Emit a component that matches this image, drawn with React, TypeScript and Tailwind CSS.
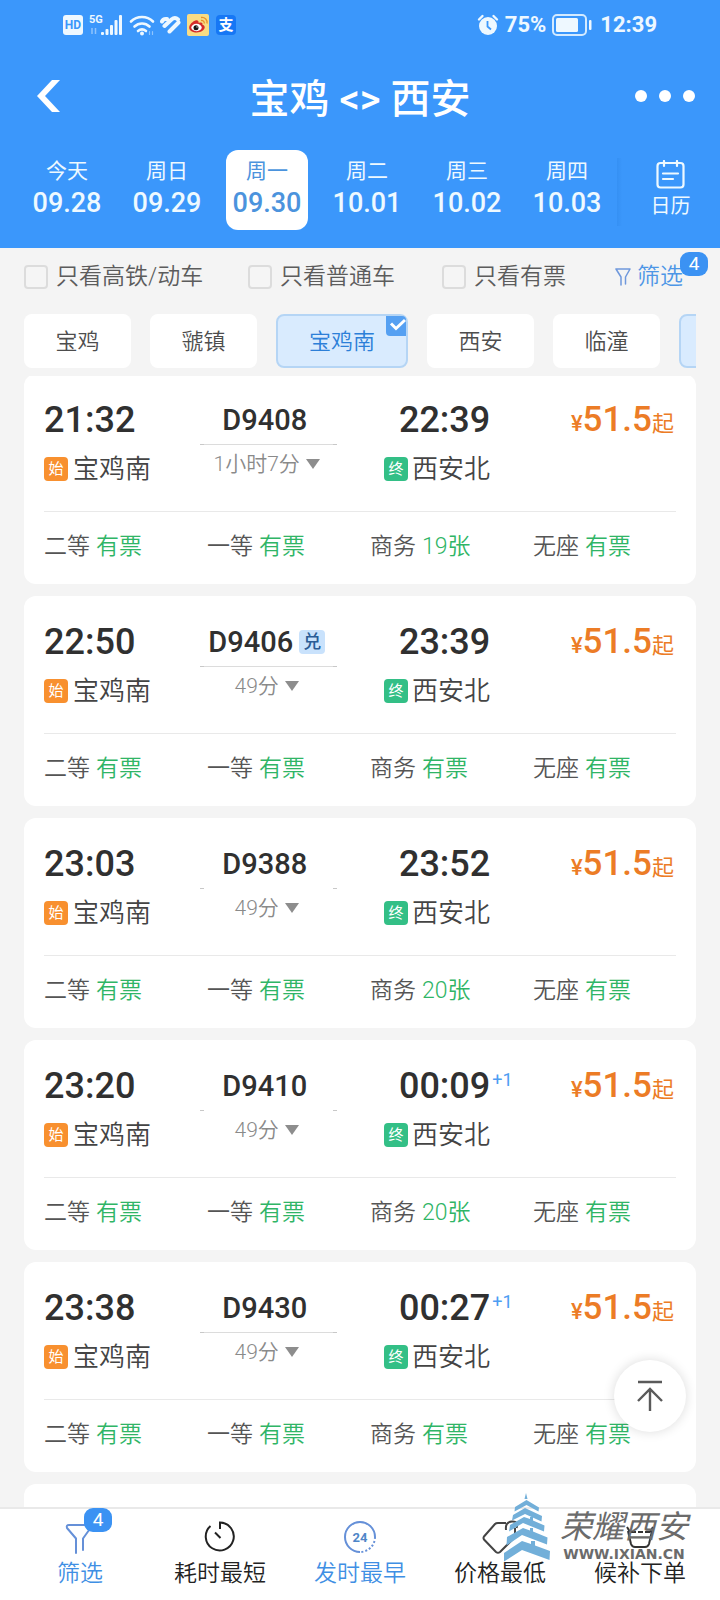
import React from 'react';
import clsx from 'clsx';

interface Seat {
  name: string;
  left: string;
}

interface Train {
  no: string;
  depart: string;
  arrive: string;
  duration: string;
  nextDay?: boolean;
  exchange?: boolean;
  faintLine?: boolean;
  business: string;
}

const dates = [
  { week: '今天', day: '09.28' },
  { week: '周日', day: '09.29' },
  { week: '周一', day: '09.30' },
  { week: '周二', day: '10.01' },
  { week: '周三', day: '10.02' },
  { week: '周四', day: '10.03' },
];

const trains: Train[] = [
  { no: 'D9408', depart: '21:32', arrive: '22:39', duration: '1小时7分', business: '19张' },
  { no: 'D9406', depart: '22:50', arrive: '23:39', duration: '49分', exchange: true, business: '有票' },
  { no: 'D9388', depart: '23:03', arrive: '23:52', duration: '49分', faintLine: true, business: '20张' },
  { no: 'D9410', depart: '23:20', arrive: '00:09', duration: '49分', nextDay: true, faintLine: true, business: '20张' },
  { no: 'D9430', depart: '23:38', arrive: '00:27', duration: '49分', nextDay: true, business: '有票' },
];

const StatusBar: React.FC = () => (
  <div className="flex h-[49px] items-center justify-between pl-[63px] pr-[63px]">
    <div className="flex items-center">
      <span className="flex h-5 w-5 items-center justify-center rounded-[3px] bg-[#eef8ff] text-[12px] font-bold leading-5 text-[#3b97fb]">
        HD
      </span>
      <svg className="ml-1.5 h-6 w-[34px]" viewBox="0 0 34 24" fill="#eef8ff">
        <text x="0" y="10" fontSize="11" fontWeight="700" fontFamily="Roboto, sans-serif">5G</text>
        <path d="M3 15v6M6.500 15v6" stroke="#8fc4fd" strokeWidth="1.500" />
        <rect x="12" y="19" width="3" height="3" rx="1" />
        <rect x="16.500" y="16" width="3" height="6" rx="1" />
        <rect x="21" y="12" width="3" height="10" rx="1" />
        <rect x="25.500" y="7" width="3" height="15" rx="1" />
        <rect x="30" y="2" width="3" height="20" rx="1" />
      </svg>
      <svg className="ml-1.5 h-6 w-[26px]" viewBox="0 0 26 24" fill="none" stroke="#eef8ff" strokeWidth="2.600" strokeLinecap="round">
        <path d="M2 8.500c6-6 16-6 22 0M5.500 13.500c4.200-4 10.800-4 15 0M9 18c2.400-2 5.600-2 8 0" />
        <circle cx="13" cy="20.500" r="2" fill="#eef8ff" stroke="none" />
        <path d="M20.500 18.500v3M23.500 18.500v3" stroke="#8fc4fd" strokeWidth="1.200" />
      </svg>
      <svg className="ml-1 h-5 w-[22px]" viewBox="0 0 22 20" fill="none" stroke="#eef8ff" strokeWidth="4" strokeLinecap="round" strokeLinejoin="round">
        <path d="M3 6.500q1-3 5-2.500M5.500 11L12.500 4.500q3.500-3 6.500 0M10.500 16.500L19.500 7.500" />
      </svg>
      <svg className="ml-1.5 h-[22px] w-[22px]" viewBox="0 0 22 22">
        <rect width="22" height="22" rx="2" fill="#f9dc84" />
        <path d="M9 6.200c-3 .8-6.800 4.300-6.800 7.500 0 3 3.600 4.800 7.500 4.800 4.700 0 8-2.700 8-5.200 0-1.600-1.200-2.300-2.300-2.600.6-1.600-.6-2.900-3.800-1.700.4-1.600-.6-3.200-2.600-2.800z" fill="#d52b2a" />
        <ellipse cx="9.500" cy="13.500" rx="5.200" ry="3.700" fill="#fff" />
        <circle cx="9" cy="13.700" r="2.500" fill="#151515" />
        <circle cx="10" cy="12.900" r=".7" fill="#fff" />
        <path d="M14 6.500c2-.3 3.500 1 3.300 3M14 3.500c4-.6 6.700 2.500 6 6" fill="none" stroke="#e8912a" strokeWidth="1.300" />
      </svg>
      <span className="ml-[7px] flex h-5 w-5 items-center justify-center rounded bg-[#1677f5] text-[15px] font-bold leading-5 text-white">
        支
      </span>
    </div>
    <div className="flex items-center text-[22px] font-bold text-[#eef8ff]">
      <svg className="mr-1.5 h-[22px] w-[22px]" viewBox="0 0 22 22" fill="none">
        <circle cx="11" cy="12" r="9" fill="#eef8ff" />
        <path d="M2 5.500L5.500 2M20 5.500L16.500 2" stroke="#eef8ff" strokeWidth="2.400" strokeLinecap="round" />
        <path d="M10.500 7v5.500l3.500 3" stroke="#3b97fb" strokeWidth="1.800" />
      </svg>
      75%
      <svg className="ml-1.5 mr-2 h-[22px] w-[40px]" viewBox="0 0 40 22" fill="none">
        <rect x="1" y="1" width="33" height="20" rx="4" stroke="#d3eaff" strokeWidth="2" />
        <rect x="4" y="4" width="22" height="14" rx="1.500" fill="#eef8ff" />
        <rect x="37" y="6" width="2.500" height="10" rx="1" fill="#eef8ff" />
      </svg>
      12:39
    </div>
  </div>
);

const Header: React.FC = () => (
  <header className="bg-[#3b97fb] pb-[18px] text-white">
    <StatusBar />
    <div className="flex h-[101px] items-center justify-between pb-2 pl-[37px] pr-[25px]">
      <button aria-label="返回" className="flex w-12">
        <svg className="h-8 w-[23px]" viewBox="0 0 23 32" fill="#fff">
          <path d="M15 0h8L8 16l15 16h-8L0 16z" />
        </svg>
      </button>
      <h1 className="pt-2 text-[40px] font-medium leading-[48px]">宝鸡 &lt;&gt; 西安</h1>
      <button aria-label="更多" className="flex gap-3">
        <span className="h-3 w-3 rounded-full bg-white" />
        <span className="h-3 w-3 rounded-full bg-white" />
        <span className="h-3 w-3 rounded-full bg-white" />
      </button>
    </div>
    <nav className="grid grid-cols-[repeat(6,minmax(0,100fr))_minmax(0,103fr)] pl-[17px]">
      {dates.map((d) => {
        const active = d.day === '09.30';
        return (
          <button
            key={d.day}
            className={clsx(
              'mx-auto flex h-20 w-[82px] flex-col items-center rounded-xl pt-1.5',
              active ? 'bg-white text-[#4b93dd]' : 'text-[#eef9ff]',
            )}
          >
            <span className="text-[21px] leading-[30px]">{d.week}</span>
            <span className="text-[27px] font-medium leading-[34px]">{d.day}</span>
          </button>
        );
      })}
      <button className="mb-1 mt-2 flex flex-col items-center bg-linear-to-r from-[#3590f3] to-[#3b97fb] to-5% pl-1 pt-0.5 text-[#eef9ff]">
        <svg className="h-[29px] w-[29px]" viewBox="0 0 29 29" fill="none" stroke="currentColor" strokeWidth="2.200" strokeLinecap="round">
          <rect x="1.500" y="3" width="26" height="24.500" rx="3" />
          <path d="M8 1v5M21 1v5M7 13.500h15M7 19h10" />
        </svg>
        <span className="text-[20px] leading-[34px]">日历</span>
      </button>
    </nav>
  </header>
);

const CheckFilter: React.FC<{ label: string }> = ({ label }) => (
  <label className="flex items-center gap-2 whitespace-nowrap text-[#5c5c5c]">
    <input
      type="checkbox"
      className="h-6 w-6 shrink-0 appearance-none rounded border-2 border-[#dcdcdc] bg-[#f5f5f5] checked:bg-[#3b97fb]"
    />
    {label}
  </label>
);

const Badge: React.FC<{ className: string }> = ({ className }) => (
  <span
    className={clsx(
      'absolute flex h-6 w-7 items-center justify-center rounded-[9px] bg-[#3b92f3] text-[19px] font-normal leading-6 text-white',
      className,
    )}
  >
    4
  </span>
);

const Filters: React.FC = () => (
  <div className="grid h-[58px] grid-cols-[224fr_194fr_173fr_105fr] items-center pl-6 text-[23px] font-[350]">
    <CheckFilter label="只看高铁/动车" />
    <CheckFilter label="只看普通车" />
    <CheckFilter label="只看有票" />
    <button className="relative flex items-center gap-1.5 whitespace-nowrap text-[#4d96e6]">
      <svg className="h-[18px] w-4" viewBox="0 0 16 18" fill="none" stroke="#6f98dc" strokeWidth="1.500">
        <path d="M6 17V9L1 1h14l-4.500 8v7" strokeLinecap="round" strokeLinejoin="round" />
      </svg>
      筛选
      <Badge className="-top-2 right-3" />
    </button>
  </div>
);

const stations = ['宝鸡', '虢镇', '宝鸡南', '西安', '临潼'];

const Stations: React.FC = () => (
  <div className="mx-6 mt-2 flex gap-[19px] overflow-hidden text-[22px] font-[350]">
    {stations.map((s) => {
      const active = s === '宝鸡南';
      return (
        <button
          key={s}
          className={clsx(
            'relative h-[54px] shrink-0 rounded-lg',
            active ? 'w-[132px] border-2 border-[#b5d5f5] bg-[#d9ebfe] text-[#2c7fd8]' : 'w-[107px] bg-white text-[#4d4d4d]',
          )}
        >
          {s}
          {active && (
            <svg className="absolute right-0 top-0 h-5 w-5" viewBox="0 0 20 20" fill="none">
              <path d="M0 0h16a4 4 0 014 4v16H4a4 4 0 01-4-4z" fill="#55a0f2" />
              <path d="M5 7.500l5 5L19 4" stroke="#fff" strokeWidth="3" />
            </svg>
          )}
        </button>
      );
    })}
    <button aria-label="西安北" className="h-[54px] w-[132px] shrink-0 rounded-lg border-2 border-[#b5d5f5] bg-[#d9ebfe]" />
  </div>
);

const StationTag: React.FC<{ text: string; color: string }> = ({ text, color }) => (
  <span className={clsx('flex h-6 w-6 items-center justify-center rounded text-[15px] font-normal leading-6 text-white', color)}>
    {text}
  </span>
);

const TrainCard: React.FC<{ train: Train }> = ({ train }) => {
  const seats: Seat[] = [
    { name: '二等', left: '有票' },
    { name: '一等', left: '有票' },
    { name: '商务', left: train.business },
    { name: '无座', left: '有票' },
  ];

  return (
    <article className="rounded-xl bg-white pb-[18px] pt-6">
      <div className="mx-5 grid grid-cols-[156fr_136fr_338fr] border-b border-[#e9e9e9] pb-[23px]">
        <div>
          <div className="text-4xl font-medium leading-[44px]">{train.depart}</div>
          <div className="mt-2 flex items-center gap-[5px] text-[26px] font-[350] leading-[38px] text-[#444]">
            <StationTag text="始" color="bg-[#f8902f]" />
            宝鸡南
          </div>
        </div>
        <div className="flex flex-col">
          <div className="flex items-center justify-center gap-1.5 pr-2 text-[29px] font-medium leading-[44px]">
            {train.no}
            {train.exchange && (
              <span className="-mr-1 flex h-6 w-[26px] items-center justify-center rounded bg-[#c9e2fc] text-[18px] leading-6 text-[#2a5c96]">
                兑
              </span>
            )}
          </div>
          <div className={clsx('mt-0.5 flex items-center justify-between', !train.faintLine && 'bg-[#dcdcdc]')}>
            <span className="h-px w-1 bg-[#c8c8c8]" />
            <span className="h-px w-1 bg-[#c8c8c8]" />
          </div>
          <button className="flex items-center justify-center gap-1.5 pr-1 text-[21px] font-[350] leading-[38px] text-[#8a8a8a]">
            {train.duration}
            <svg className="h-[10px] w-[14px]" viewBox="0 0 14 10" fill="#8d8d8d">
              <path d="M0 0h14L7 10z" />
            </svg>
          </button>
        </div>
        <div className="flex justify-between pl-[47px] pr-0.5">
          <div>
            <div className="flex pl-[15px] text-4xl font-medium leading-[44px]">
              {train.arrive}
              {train.nextDay && <span className="pl-0.5 pt-1 text-[18px] font-normal leading-6 text-[#4d9df2]">+1</span>}
            </div>
            <div className="mt-2 flex items-center gap-1 text-[26px] font-[350] leading-[38px] text-[#444]">
              <StationTag text="终" color="bg-[#33bf86]" />
              西安北
            </div>
          </div>
          <div className="text-[35px] font-medium leading-[44px] text-[#ec7c26]">
            <span className="text-[22px]">¥</span>51.5<span className="text-[22px] font-normal">起</span>
          </div>
        </div>
      </div>
      <ul className="grid grid-cols-4 pl-5 pt-4 text-[23px] font-[350] leading-[38px] text-[#555]">
        {seats.map((seat) => (
          <li key={seat.name} className="flex gap-1.5">
            {seat.name}
            <span className="text-[#2fb566]">{seat.left}</span>
          </li>
        ))}
      </ul>
    </article>
  );
};

const navItem = 'flex flex-col items-center gap-0.5';

const BottomNav: React.FC = () => (
  <nav className="grid grid-cols-5 border-t-2 border-[#e9e9e9] bg-white px-2.5 pb-2 pt-[11px] text-[23px] font-[350] leading-9 text-[#222]">
    <button className={clsx(navItem, 'text-[#3f8fe4]')}>
      <span className="relative">
        <svg className="h-[34px] w-8" viewBox="0 0 32 34" fill="none" stroke="#6590d8" strokeWidth="2" strokeLinecap="round" strokeLinejoin="round">
          <path d="M12 33V18.500L3 8q-1-3 2-3h20q3 0 1.500 3L19 18.500V30" />
        </svg>
        <Badge className="-right-4 -top-3" />
      </span>
      筛选
    </button>
    <button className={navItem}>
      <svg className="h-[34px] w-8" viewBox="0 0 32 34" fill="none" stroke="#222" strokeWidth="2">
        <path d="M6.500 6A14 14 0 1 0 16 2.500v6.500M11 12.500l5.500 5.500" />
      </svg>
      耗时最短
    </button>
    <button className={clsx(navItem, 'text-[#3f8fe4]')}>
      <svg className="h-[34px] w-8" viewBox="0 0 32 34" fill="none" stroke="#6590d8" strokeWidth="2">
        <path d="M31 17A15 15 0 1 0 16 32" />
        <path d="M31 17A15 15 0 0 1 16 32" strokeDasharray="2 2" />
        <text x="16" y="22" textAnchor="middle" fontSize="13" fontWeight="700" fill="#4f86c8" stroke="none">24</text>
      </svg>
      发时最早
    </button>
    <button className={navItem}>
      <svg className="h-[34px] w-9" viewBox="0 0 36 34" fill="none" stroke="#444" strokeWidth="2" strokeLinejoin="round">
        <path d="M24 3h-8q-2 0-3 1L2 16.500q-1 1.500 0 3L14 32q2 1.500 4 0L33 17V8" />
        <path d="M24 10q-1-8 6-8.500t4.500 6.500" />
      </svg>
      价格最低
    </button>
    <button className={navItem}>
      <svg className="h-[34px] w-8" viewBox="0 0 32 34" fill="none" stroke="#333" strokeWidth="2" strokeLinejoin="round">
        <path d="M4 11l3 13q1 3 4 3h10q3 0 4-3l3-13M7 12h5M14 12h5M21 12h5M3 7l3 5M29 7l-3 5" />
      </svg>
      候补下单
    </button>
  </nav>
);

const Watermark: React.FC = () => (
  <div className="pointer-events-none absolute bottom-[37px] right-8 flex items-end gap-2">
    <svg className="h-[70px] w-12" viewBox="0 0 48 70" fill="#72afd9">
      <path d="M22 0l1.500 6h-3z" />
      <path d="M22.500 7L35 14.500l-.5 4L22.500 12l-12 6.500.5-4.500z" />
      <path d="M21 15l17 8-.5 5.500L21 21 8 27.500 9 22z" />
      <path d="M20 24l6 2v-2h3v3.500l11.500 5-.5 6L19 30 5 38.500 6 32z" />
      <path d="M19 35l7 2.500V35h3v3.500l14.500 6-.5 7L18 42 2.500 52.500 3 44z" />
      <path d="M18 48l9 3v-3h4v4.500L46 58l-.5 9L18 57 0 68.500V60z" />
    </svg>
    <div className="flex flex-col items-center text-[#6b6b6b]">
      <span className="text-[32px] italic leading-9">荣耀西安</span>
      <span className="font-['DejaVu_Sans',sans-serif] text-sm font-bold leading-[18px]">WWW.IXIAN.CN</span>
    </div>
  </div>
);

const App: React.FC = () => {
  return (
    <div className="relative flex h-screen flex-col overflow-hidden bg-[#f4f4f4] font-[Roboto,'Noto_Sans_CJK_SC',sans-serif] text-[#303030]">
      <Header />
      <Filters />
      <Stations />
      <main className="mt-2 min-h-0 flex-1 overflow-y-auto px-6 [scrollbar-width:none]">
        <div className="-mt-0.5 flex flex-col gap-3">
          {trains.map((train) => (
            <TrainCard key={train.no} train={train} />
          ))}
          <div className="h-40 rounded-xl bg-white" />
        </div>
      </main>
      <button
        aria-label="回到顶部"
        className="absolute bottom-[168px] right-[34px] flex h-[72px] w-[72px] items-center justify-center rounded-full bg-white shadow-[0_0_12px_rgba(0,0,0,0.14)]"
      >
        <svg className="h-8 w-7" viewBox="0 0 28 32" fill="none" stroke="#5a5a5a" strokeWidth="2.400">
          <path d="M2 2h24M14 31V9M2 21L14 9l12 12" />
        </svg>
      </button>
      <BottomNav />
      <Watermark />
    </div>
  );
};

export default App;
